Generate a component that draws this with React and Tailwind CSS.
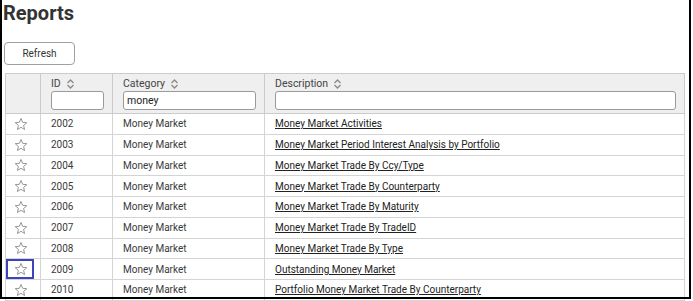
import React from 'react';

const rows = [
    { id: 2002, desc: 'Money Market Activities' },
    { id: 2003, desc: 'Money Market Period Interest Analysis by Portfolio' },
    { id: 2004, desc: 'Money Market Trade By Ccy/Type' },
    { id: 2005, desc: 'Money Market Trade By Counterparty' },
    { id: 2006, desc: 'Money Market Trade By Maturity' },
    { id: 2007, desc: 'Money Market Trade By TradeID' },
    { id: 2008, desc: 'Money Market Trade By Type' },
    { id: 2009, desc: 'Outstanding Money Market' },
    { id: 2010, desc: 'Portfolio Money Market Trade By Counterparty' },
];

const SortIcon = () => (
    <svg className="w-[9px] h-[10px] ml-[5px] inline-block" viewBox="0 0 9 10" fill="none" stroke="#8a8a8a" strokeWidth="1.3">
        <path d="M1.5 4l3-3 3 3M1.5 6l3 3 3-3" />
    </svg>
);

const Star = () => (
    <svg className="w-[14px] h-[14px]" viewBox="0 0 24 24" fill="none" stroke="#808080" strokeWidth="1.4" strokeLinejoin="round">
        <path d="M12 2.5l2.8 6.6 7.1.6-5.4 4.7 1.6 7-6.1-3.7-6.1 3.7 1.6-7L2.1 9.7l7.1-.6z" />
    </svg>
);

const HeaderCell = ({ label, value }) => (
    <th className="border border-[#cbcbcb] pl-[10px] pr-[8px] pt-[3px] pb-[3px] text-left font-normal align-top">
        <div className="flex items-center h-[13px] text-[10.5px] text-[#444]">
            {label}
            <SortIcon />
        </div>
        <input
            readOnly
            value={value}
            className="block mt-[1px] w-full h-[19px] border border-[#9a9a9a] rounded-[3px] bg-white px-[3px] text-[10.5px] text-[#222] outline-none"
        />
    </th>
);

const App = () => {
    return (
        <div className="relative w-[693px] h-[301px] bg-white overflow-hidden" style={{ fontFamily: 'Roboto, "Liberation Sans", sans-serif' }}>
            <h1 className="pl-[3px] pt-[1px] text-[20px] leading-[24px] font-bold text-[#333]">Reports</h1>

            <button className="block ml-[4px] mt-[17px] w-[71px] h-[23px] border border-[#a0a0a0] rounded-[4px] bg-white text-[10px] text-[#333]">
                Refresh
            </button>

            <table className="ml-[5px] mt-[8px] w-[680px] border-collapse table-fixed">
                <colgroup>
                    <col className="w-[35px]" />
                    <col className="w-[72px]" />
                    <col className="w-[152px]" />
                    <col />
                </colgroup>
                <thead className="bg-[#efefef]">
                    <tr className="h-[40px]">
                        <th className="border border-[#cbcbcb]"></th>
                        <HeaderCell label="ID" value="" />
                        <HeaderCell label="Category" value="money" />
                        <HeaderCell label="Description" value="" />
                    </tr>
                </thead>
                <tbody className="text-[10px] text-[#3a3a3a]">
                    {rows.map((r) => (
                        <tr key={r.id} className="h-[20.75px]">
                            <td className="border border-[#d4d4d4] p-0">
                                <div className="flex items-center pl-[8px]">
                                    <Star />
                                </div>
                            </td>
                            <td className="border border-[#d4d4d4] pl-[10px] py-0">{r.id}</td>
                            <td className="border border-[#d4d4d4] pl-[10px] py-0">Money Market</td>
                            <td className="border border-[#d4d4d4] pl-[10px] py-0">
                                <a className="underline text-[#222] underline-offset-[1px]">{r.desc}</a>
                            </td>
                        </tr>
                    ))}
                </tbody>
            </table>

            {/* marked favourite */}
            <div className="absolute left-[6px] top-[259px] w-[28px] h-[20px] border-2 border-[#3b44bb] pointer-events-none"></div>

            {/* screenshot frame */}
            <div className="absolute left-0 top-[-4px] w-[691px] h-[303px] border-2 border-black pointer-events-none"></div>
        </div>
    );
};

export default App;
